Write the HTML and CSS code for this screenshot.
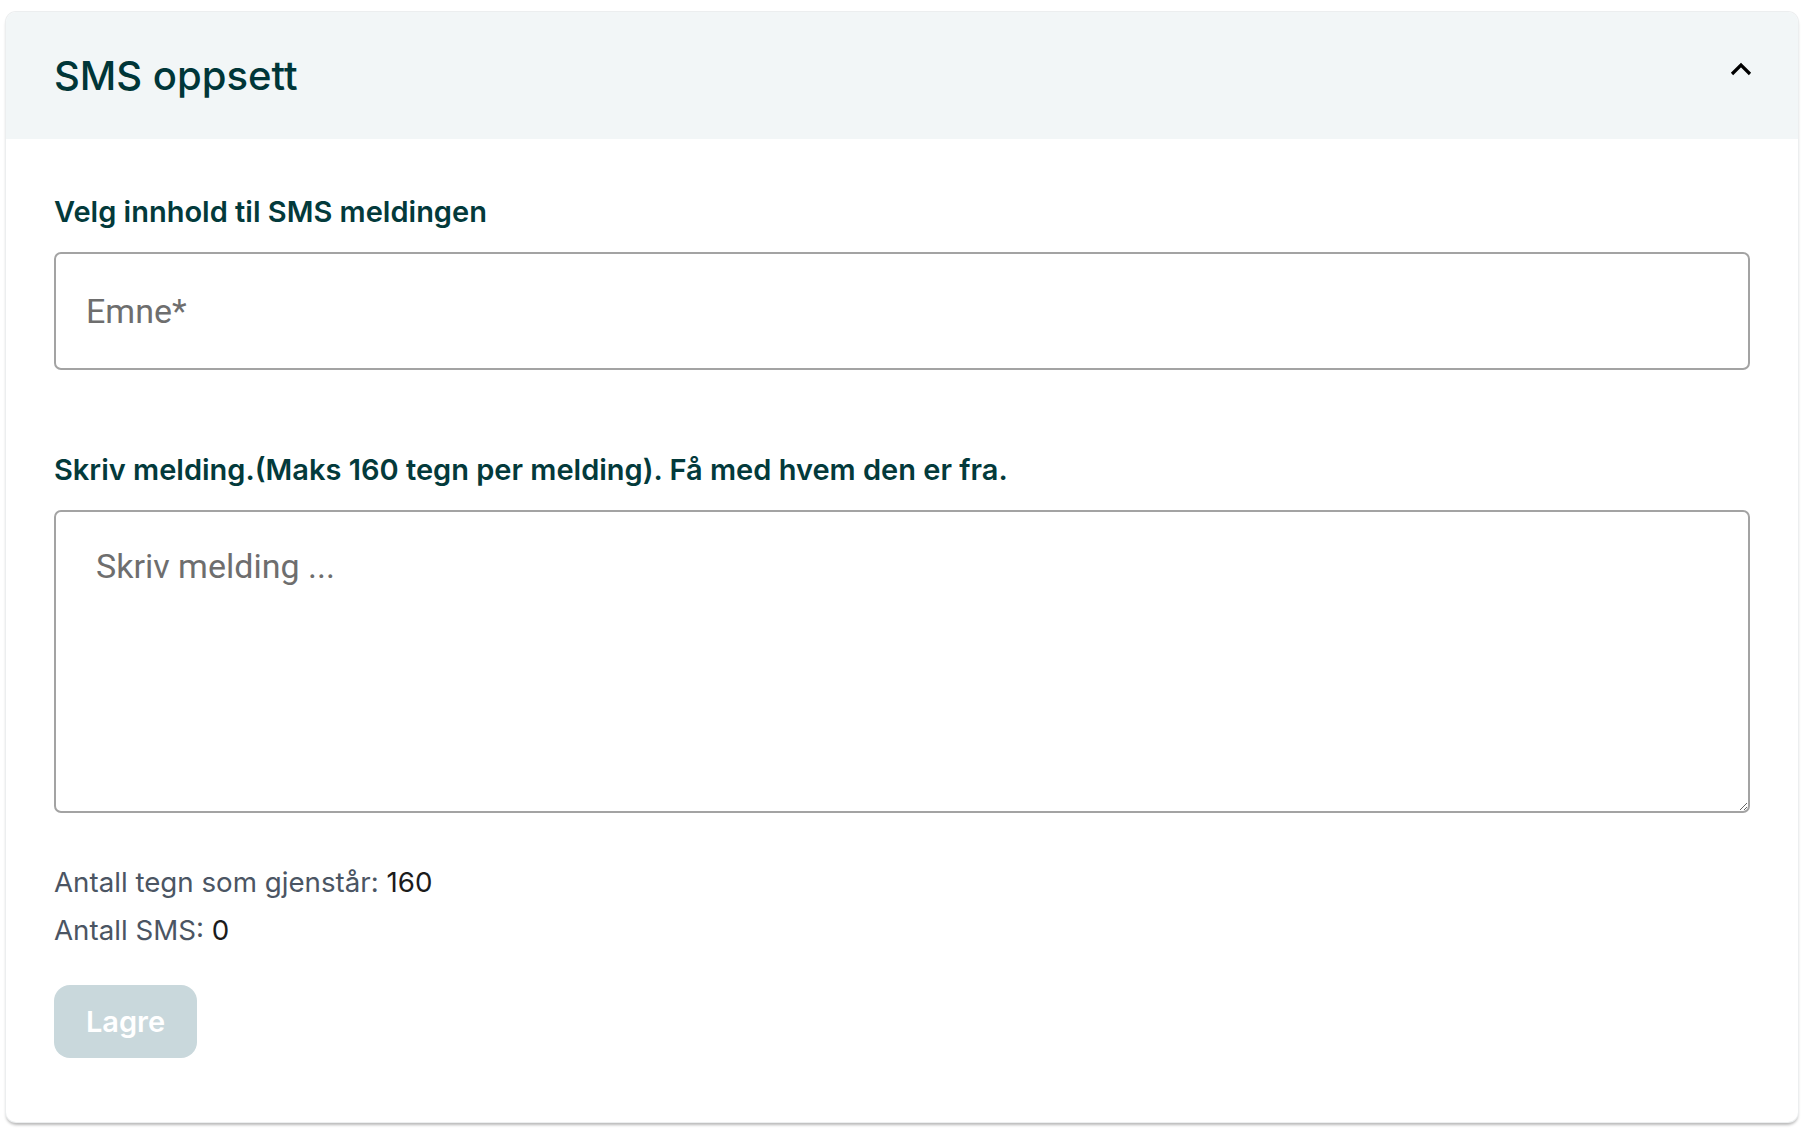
FILE: index.html
```html
<!DOCTYPE html>
<html lang="no">
<head>
    <meta charset="UTF-8">
    <title>SMS oppsett</title>
    <meta name="viewport" content="width=device-width, initial-scale=1.0">
    <link rel="stylesheet" href="styles.css">
</head>
<body>
    <div class="card">
        <div class="card-header">
            <h2 class="title">SMS oppsett</h2>
            <svg class="chevron" width="22" height="14" viewBox="0 0 22 14">
                <path d="M2 12 L11 3 L20 12" fill="none" stroke="#000" stroke-width="3.2"/>
            </svg>
        </div>
        <div class="card-body">
            <label class="label" for="emne">Velg innhold til SMS meldingen</label>
            <input class="field" id="emne" type="text" placeholder="Emne*">

            <label class="label label-msg" for="melding">Skriv melding.(Maks 160 tegn per melding). Få med hvem den er fra.</label>
            <textarea class="message" id="melding" placeholder="Skriv melding ..."></textarea>

            <div class="counts">
                <p>Antall tegn som gjenstår: <span>160</span></p>
                <p>Antall SMS: <span>0</span></p>
            </div>

            <button class="save" disabled>Lagre</button>
        </div>
    </div>
</body>
</html>
```

FILE: styles.css
```css
body {
    margin: 0;
    padding: 12px 16px 16px 6px;
    background: #fff;
    font-family: Inter, "Noto Sans", sans-serif;
}
.card {
    background: #fff;
    border-radius: 10px;
    box-shadow: 0 0 0 1px #eceeef, 0 3px 3px rgba(0, 0, 0, 0.28);
    overflow: hidden;
}
.card-header {
    height: 127px;
    background: #f2f6f7;
    display: flex;
    align-items: center;
    justify-content: space-between;
    padding: 0 46px 0 48px;
}
.title {
    margin: 0;
    font-size: 40px;
    font-weight: 500;
    color: #003638;
}
.chevron {
    margin-bottom: 14px;
}
.card-body {
    padding: 51px 48px 64px 48px;
}
.label {
    display: block;
    font-size: 29px;
    font-weight: 600;
    color: #033a3b;
    line-height: 44px;
    margin-bottom: 18px;
}
.label-msg {
    margin-top: 78px;
}
.field,
.message {
    display: block;
    box-sizing: border-box;
    width: 100%;
    border: 2px solid #a3a3a3;
    border-radius: 7px;
    font-family: Roboto, sans-serif;
    font-size: 34px;
    color: #222;
    background: #fff;
    margin: 0;
}
.field {
    height: 118px;
    padding: 0 30px;
}
.message {
    height: 303px;
    padding: 34px 40px;
    resize: vertical;
}
.field::placeholder,
.message::placeholder {
    color: #6e6e6e;
}
.counts {
    margin-top: 45px;
    font-size: 27.7px;
    color: #4b5563;
}
.counts p {
    margin: 0;
    line-height: 48px;
}
.counts span {
    color: #1b1b1b;
}
.save {
    display: block;
    margin-top: 31px;
    width: 143px;
    height: 73px;
    border: none;
    border-radius: 16px;
    background: #c9d8dc;
    color: #fff;
    font-family: Inter, sans-serif;
    font-size: 29px;
    font-weight: 600;
}
```
